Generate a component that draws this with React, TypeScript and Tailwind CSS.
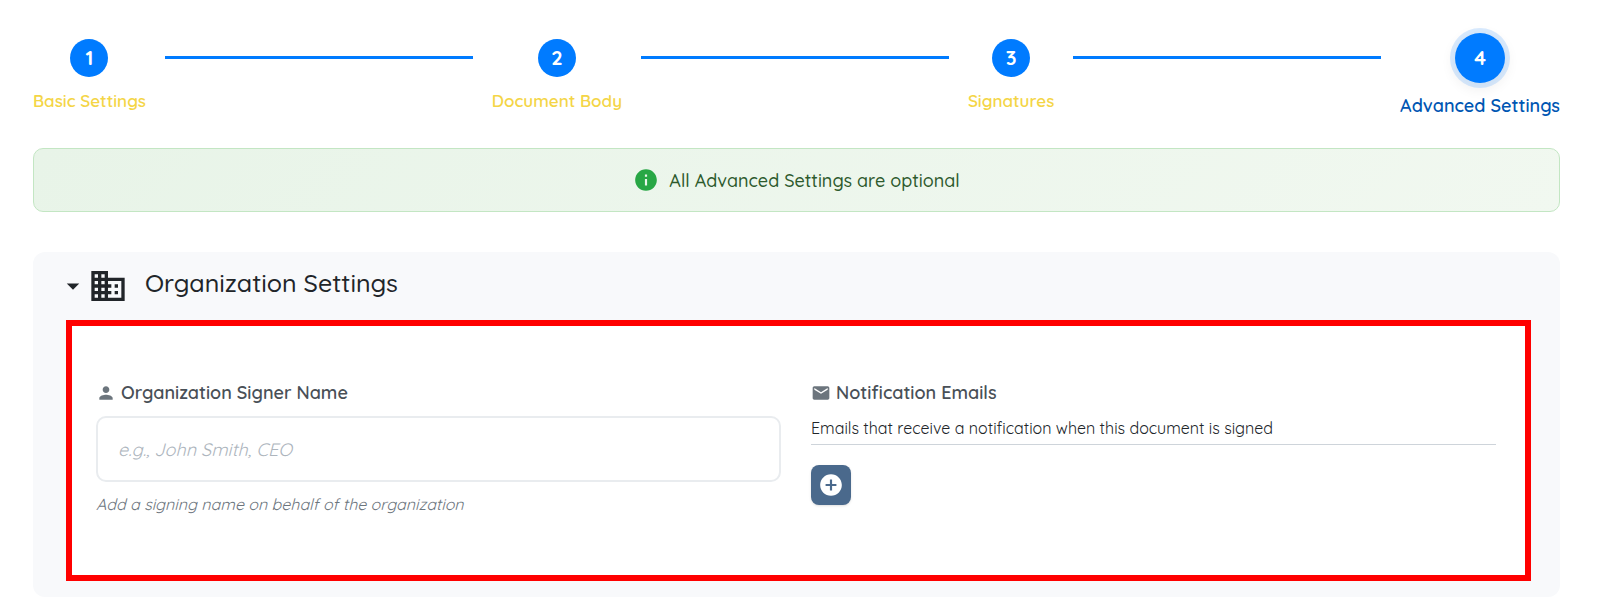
import { Fragment, useState } from "react";
import { MdAddCircle, MdArrowDropDown, MdBusiness, MdEmail, MdInfo, MdPerson } from "react-icons/md";
import { clsx } from "clsx";

const steps = ["Basic Settings", "Document Body", "Signatures", "Advanced Settings"];

interface StepProps {
  number: number;
  label: string;
  active: boolean;
}

function Step({ number, label, active }: StepProps) {
  return (
    <li className="flex flex-col items-center" aria-current={active ? "step" : undefined}>
      <div className="flex h-[38px] items-center">
        <span
          className={clsx(
            "flex items-center justify-center rounded-full bg-[#007bff] text-xl font-bold text-white",
            active
              ? "size-[50px] shadow-[0_0_0_5px_rgba(0,123,255,0.15),0_4px_12px_4px_rgba(0,0,0,0.05)]"
              : "size-[38px]"
          )}
        >
          {number}
        </span>
      </div>
      <span
        className={clsx(
          "leading-6 whitespace-nowrap",
          active ? "mt-[17px] text-lg font-semibold text-[#0056b3]" : "mt-3 text-[17px] font-semibold text-[#f4d546]"
        )}
      >
        {label}
      </span>
    </li>
  );
}

function Stepper({ current }: { current: number }) {
  return (
    <ol className="flex items-start">
      {steps.map((label, i) => (
        <Fragment key={label}>
          {i > 0 && <li aria-hidden="true" className="mx-[19px] mt-[17px] h-[3px] flex-1 bg-[#007bff]" />}
          <Step number={i + 1} label={label} active={i + 1 === current} />
        </Fragment>
      ))}
    </ol>
  );
}

function App() {
  const [open, setOpen] = useState(true);
  const [signer, setSigner] = useState("");

  return (
    <main className="bg-white px-[33px] pt-[39px] pb-1 font-['Quicksand','Lato',sans-serif] text-[#212529]">
      <div className="pr-7">
        <Stepper current={4} />

        <div className="mt-[30px] flex h-16 items-center justify-center gap-2.5 rounded-[10px] border border-[#c3e6c3] bg-linear-135 from-[#e8f4e8] to-[#f1f8f0] text-lg font-medium text-[#2d5a2d]">
          <MdInfo size={26} className="text-[#28a745]" />
          <p className="pt-px">All Advanced Settings are optional</p>
        </div>

        <section className="mt-10 rounded-xl bg-[#f8f9fb] pt-3.5 pr-[29px] pb-4 pl-[33px]">
          <h2>
            <button type="button" aria-expanded={open} onClick={() => setOpen(!open)} className="flex h-10 items-center">
              <MdArrowDropDown size={30} className="-mx-2" />
              <MdBusiness size={40} className="ml-2" />
              <span className="ml-[17px] pb-1.5 text-[25px] leading-8 font-medium">Organization Settings</span>
            </button>
          </h2>

          {open && (
            <div className="mt-3.5 grid grid-cols-2 gap-[30px] border-6 border-[#ff0000] bg-white pt-[55px] pr-[29px] pb-[61px] pl-6">
              <div>
                <label htmlFor="signer" className="flex h-6 items-center gap-[5px] text-lg font-semibold text-[#495057]">
                  <MdPerson size={20} className="text-[#6c757d]" />
                  Organization Signer Name
                </label>
                <input
                  id="signer"
                  type="text"
                  value={signer}
                  onChange={(e) => setSigner(e.target.value)}
                  placeholder="e.g., John Smith, CEO"
                  className="mt-[11px] h-[66px] w-full rounded-[10px] border-2 border-[#e9ecef] px-5 text-lg placeholder:text-[#adb5bd] placeholder:italic"
                />
                <p className="mt-3 text-base leading-5 text-[#6c757d] italic">
                  Add a signing name on behalf of the organization
                </p>
              </div>

              <div>
                <h3 className="flex h-6 items-center gap-[5px] text-lg font-semibold text-[#495057]">
                  <MdEmail size={20} className="text-[#6c757d]" />
                  Notification Emails
                </h3>
                <p className="mt-[11px] border-b border-[#ced4da] pb-1 text-base leading-6">
                  Emails that receive a notification when this document is signed
                </p>
                <button
                  type="button"
                  aria-label="Add email"
                  className="mt-5 flex size-10 items-center justify-center rounded-lg bg-[#4a698c] text-white shadow-sm"
                >
                  <MdAddCircle size={26} />
                </button>
              </div>
            </div>
          )}
        </section>
      </div>
    </main>
  );
}

export default App;
